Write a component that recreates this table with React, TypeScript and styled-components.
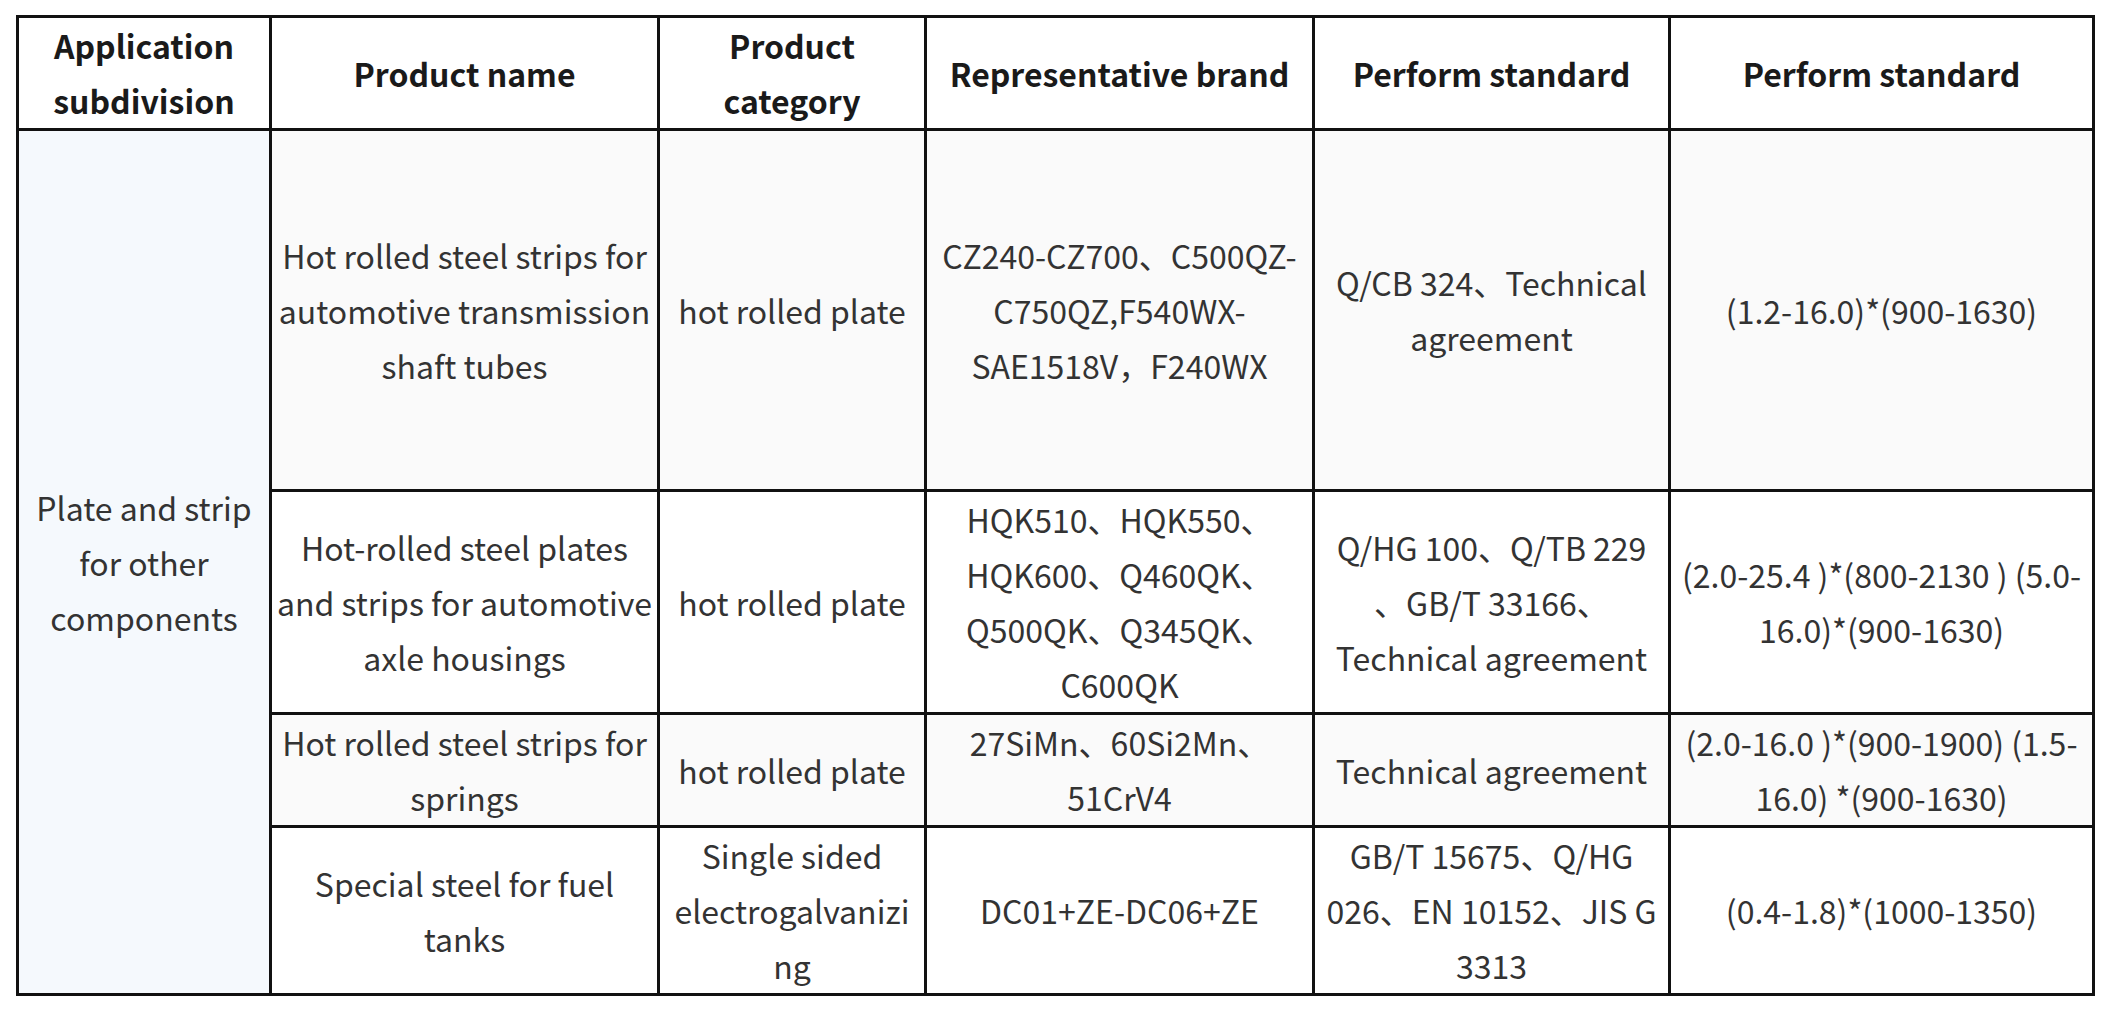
import React from 'react';
import styled, { createGlobalStyle } from 'styled-components';

const GlobalStyle = createGlobalStyle`
  html, body {
    margin: 0;
    padding: 0;
    background: #ffffff;
  }
  body {
    font-family: 'Noto Sans CJK SC', 'Noto Sans', sans-serif;
  }
`;

const Page = styled('div')`
  padding: 15px 16px;
`;

const Table = styled('table')`
  width: 2076px;
  table-layout: fixed;
  border-collapse: collapse;
  border: 3px solid #111;
  font-size: 32px;
  line-height: 55px;
`;

const HeadCell = styled('th')`
  border: 3px solid #111;
  padding: 0 2px;
  background: #ffffff;
  color: #1a1a1a;
  font-weight: 700;
  text-align: center;
  vertical-align: middle;
  white-space: nowrap;
`;

const Row = styled('tr')<{ $shade?: boolean; $height?: number }>`
  background: ${(p) => (p.$shade ? '#fafafa' : '#ffffff')};
  height: ${(p) => (p.$height ? `${p.$height}px` : 'auto')};
`;

const Cell = styled('td')<{ $tint?: boolean }>`
  border: 3px solid #111;
  padding: 0 2px;
  color: #333333;
  text-align: center;
  vertical-align: middle;
  white-space: nowrap;
  background: ${(p) => (p.$tint ? '#f5f9fd' : 'transparent')};
`;

const columns = [
  { width: 253, title: ['Application', 'subdivision'] },
  { width: 388, title: ['Product name'] },
  { width: 267, title: ['Product', 'category'] },
  { width: 388, title: ['Representative brand'] },
  { width: 356, title: ['Perform standard'] },
  { width: 424, title: ['Perform standard'] },
];

type Item = {
  name: string[];
  category: string[];
  brand: string[];
  standard: string[];
  size: string[];
  height?: number;
};

const items: Item[] = [
  {
    name: ['Hot rolled steel strips for', 'automotive transmission', 'shaft tubes'],
    category: ['hot rolled plate'],
    brand: ['CZ240-CZ700、C500QZ-', 'C750QZ,F540WX-', 'SAE1518V，F240WX'],
    standard: ['Q/CB 324、Technical', 'agreement'],
    size: ['(1.2-16.0)*(900-1630)'],
    height: 361,
  },
  {
    name: ['Hot-rolled steel plates', 'and strips for automotive', 'axle housings'],
    category: ['hot rolled plate'],
    brand: ['HQK510、HQK550、', 'HQK600、Q460QK、', 'Q500QK、Q345QK、', 'C600QK'],
    standard: ['Q/HG 100、Q/TB 229', '、GB/T 33166、', 'Technical agreement'],
    size: ['(2.0-25.4 )*(800-2130 ) (5.0-', '16.0)*(900-1630)'],
  },
  {
    name: ['Hot rolled steel strips for', 'springs'],
    category: ['hot rolled plate'],
    brand: ['27SiMn、60Si2Mn、', '51CrV4'],
    standard: ['Technical agreement'],
    size: ['(2.0-16.0 )*(900-1900) (1.5-', '16.0) *(900-1630)'],
  },
  {
    name: ['Special steel for fuel', 'tanks'],
    category: ['Single sided', 'electrogalvanizi', 'ng'],
    brand: ['DC01+ZE-DC06+ZE'],
    standard: ['GB/T 15675、Q/HG', '026、EN 10152、JIS G', '3313'],
    size: ['(0.4-1.8)*(1000-1350)'],
  },
];

function Lines({ lines }: { lines: string[] }) {
  return (
    <>
      {lines.map((line, i) => (
        <React.Fragment key={i}>
          {i > 0 && <br />}
          {line}
        </React.Fragment>
      ))}
    </>
  );
}

export default function App() {
  return (
    <Page>
      <GlobalStyle />
      <Table>
        <colgroup>
          {columns.map((col, i) => (
            <col key={i} style={{ width: col.width }} />
          ))}
        </colgroup>
        <thead>
          <tr>
            {columns.map((col, i) => (
              <HeadCell key={i}>
                <Lines lines={col.title} />
              </HeadCell>
            ))}
          </tr>
        </thead>
        <tbody>
          {items.map((item, i) => (
            <Row key={i} $shade={i % 2 === 0} $height={item.height}>
              {i === 0 && (
                <Cell rowSpan={items.length} $tint>
                  <Lines lines={['Plate and strip', 'for other', 'components']} />
                </Cell>
              )}
              <Cell>
                <Lines lines={item.name} />
              </Cell>
              <Cell>
                <Lines lines={item.category} />
              </Cell>
              <Cell>
                <Lines lines={item.brand} />
              </Cell>
              <Cell>
                <Lines lines={item.standard} />
              </Cell>
              <Cell>
                <Lines lines={item.size} />
              </Cell>
            </Row>
          ))}
        </tbody>
      </Table>
    </Page>
  );
}
